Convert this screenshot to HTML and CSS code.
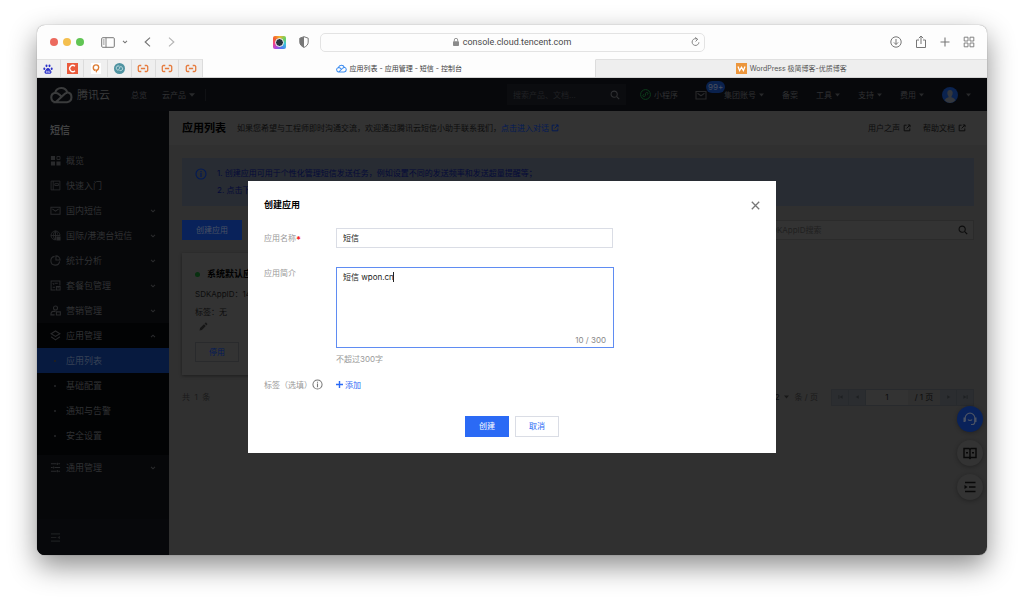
FILE: index.html
```html
<!DOCTYPE html>
<html lang="zh-CN">
<head>
<meta charset="utf-8">
<title>应用列表 - 应用管理 - 短信 - 控制台</title>
<link rel="stylesheet" href="styles.css">
</head>
<body>
<svg class="defs" aria-hidden="true">
  <symbol id="cloud" viewBox="0 0 24 18"><path d="M6 16.500a5 5 0 0 1-.6-9.900A6.600 6.600 0 0 1 18 6.200a5.200 5.200 0 0 1-.2 10.300H6l8.600-8A4.600 4.600 0 0 1 18 6.600M5.400 6.600c2.200 0 3.600 1.200 4.600 2.200l2 2" fill="none" stroke="currentColor" stroke-width="2.200"/></symbol>
  <symbol id="search" viewBox="0 0 12 12"><circle cx="5" cy="5" r="3.700" fill="none" stroke="currentColor" stroke-width="1.300"/><path d="M8 8l3 3" stroke="currentColor" stroke-width="1.500"/></symbol>
  <symbol id="down" viewBox="0 0 6 4"><path d="M0 .3h6L3 3.700z" fill="currentColor"/></symbol>
  <symbol id="chev" viewBox="0 0 6 4"><path d="M1 .8l2 2 2-2" fill="none" stroke="currentColor" stroke-width="1.100"/></symbol>
  <symbol id="ext" viewBox="0 0 10 10"><path d="M4.500 1.500h-3v7h7v-3M6 1.200h2.800V4M8.700 1.300L4.500 5.500" fill="none" stroke="currentColor" stroke-width="1.200"/></symbol>
  <symbol id="info" viewBox="0 0 12 12"><circle cx="6" cy="6" r="5" fill="none" stroke="currentColor" stroke-width="1.100"/><path d="M6 5v4M6 3v1.200" stroke="currentColor" stroke-width="1.200"/></symbol>
  <symbol id="mail" viewBox="0 0 12 12"><path d="M1 2.500h10v7.500H1zM2.500 4.300L6 6.800l3.500-2.500" fill="none" stroke="currentColor" stroke-width="1.100"/></symbol>
  <symbol id="link" viewBox="0 0 14 10"><path d="M5 1.500H3A1.500 1.500 0 0 0 1.500 3v4A1.500 1.500 0 0 0 3 8.500h2M9 1.500h2A1.500 1.500 0 0 1 12.500 3v4A1.500 1.500 0 0 1 11 8.500H9M4.500 5h5" fill="none" stroke="#e57a3c" stroke-width="1.500"/></symbol>
</svg>

<div class="window">
  <div class="toolbar">
    <div class="lights"><i class="red"></i><i class="yellow"></i><i class="green"></i></div>
    <button class="tool side" aria-label="边栏"><svg width="14" height="11" viewBox="0 0 14 11"><rect x=".7" y=".7" width="12.600" height="9.600" rx="1" fill="none" stroke="currentColor"/><path d="M5 .7v9.600M2 3h1.600M2 5h1.600M2 7h1.600" stroke="currentColor" stroke-width=".9"/></svg></button>
    <button class="tool drop" aria-label="标签组"><svg width="6" height="4"><use href="#chev"/></svg></button>
    <button class="tool back" aria-label="后退"><svg width="7" height="10" viewBox="0 0 7 10"><path d="M6 .6L1.200 5 6 9.400" fill="none" stroke="currentColor" stroke-width="1.200"/></svg></button>
    <button class="tool next" aria-label="前进"><svg width="7" height="10" viewBox="0 0 7 10"><path d="M1 .6L5.800 5 1 9.400" fill="none" stroke="currentColor" stroke-width="1.200"/></svg></button>
    <span class="camera"><i></i></span>
    <svg class="shield" width="10" height="12" viewBox="0 0 10 12"><path d="M5 .7l4.200 1.500v4C9.200 8.500 7.500 10.300 5 11.400 2.500 10.300.8 8.500.8 6.200v-4z" fill="none" stroke="#777"/><path d="M5 .7L.8 2.200v4C.8 8.500 2.500 10.300 5 11.400z" fill="#777"/></svg>
    <div class="address">
      <svg width="6" height="8" viewBox="0 0 6 8"><rect y="3.300" width="6" height="4.700" rx=".8" fill="#8b8b8b"/><path d="M1.300 3.500V2a1.700 1.700 0 0 1 3.400 0v1.500" fill="none" stroke="#8b8b8b" stroke-width=".9"/></svg>
      <span>console.cloud.tencent.com</span>
      <button class="tool reload" aria-label="刷新"><svg width="9" height="10" viewBox="0 0 9 10"><path d="M6.500 2.300A3.400 3.400 0 1 0 7.900 5.300M4.200.4l2.400 1.900-2 2.200" fill="none" stroke="currentColor" stroke-width=".9"/></svg></button>
    </div>
    <div class="actions">
      <button class="tool" aria-label="下载"><svg width="12" height="12" viewBox="0 0 12 12"><circle cx="6" cy="6" r="5.200" fill="none" stroke="currentColor"/><path d="M6 3v5.500M3.900 6.400L6 8.500l2.100-2.100" fill="none" stroke="currentColor"/></svg></button>
      <button class="tool" aria-label="共享"><svg width="12" height="14" viewBox="0 0 12 14"><path d="M4 5H1.500v7.500h9V5H8M6 9V1.200M3.800 3.200L6 1l2.200 2.200" fill="none" stroke="currentColor"/></svg></button>
      <button class="tool" aria-label="新标签页"><svg width="10" height="10" viewBox="0 0 10 10"><path d="M5 .5v9M.5 5h9" stroke="currentColor" stroke-width="1.100"/></svg></button>
      <button class="tool" aria-label="标签页概览"><svg width="12" height="12" viewBox="0 0 12 12"><path d="M1.200 1.200h3.800v3.800H1.200zM7 1.200h3.800v3.800H7zM1.200 7h3.800v3.800H1.200zM7 7h3.800v3.800H7z" fill="none" stroke="currentColor" stroke-width=".9"/></svg></button>
    </div>
  </div>

  <div class="tabs">
    <div class="pins">
      <a href="#" aria-label="百度"><svg width="10" height="10" viewBox="0 0 10 10" fill="#2a30c8"><ellipse cx="1.300" cy="4.700" rx="1" ry="1.300"/><ellipse cx="3.500" cy="1.800" rx="1" ry="1.400"/><ellipse cx="6.500" cy="1.800" rx="1" ry="1.400"/><ellipse cx="8.700" cy="4.700" rx="1" ry="1.300"/><path d="M5 4c1.500 0 1.800 1.500 2.800 2.400 1.300 1.300.7 3.300-1 3.300H3.200c-1.700 0-2.300-2-1-3.300C3.200 5.500 3.500 4 5 4z"/><path d="M3.300 7h1v1.500h-1zM5.500 6.700v1.800h1.300V6.700" fill="none" stroke="#fff" stroke-width=".5"/></svg></a>
      <a href="#" aria-label="C"><svg width="11" height="11" viewBox="0 0 11 11"><rect width="11" height="11" fill="#ea5a3c"/><path d="M8 3.300A3.100 3.100 0 1 0 8 7.700" fill="none" stroke="#fff" stroke-width="1.300"/></svg></a>
      <a href="#" aria-label="Q"><svg width="10" height="11" viewBox="0 0 10 11"><rect width="10" height="11" fill="#fff"/><path d="M4.500 7.500C3 7.200 2.300 6.200 2.300 4.800c0-1.700 1.200-2.900 2.700-2.900s2.700 1.200 2.700 2.700c0 1.300-.8 2.300-2 2.700" fill="none" stroke="#dc7b32" stroke-width="1.400"/><path d="M4.500 5.800l2 1.700L5 10z" fill="#dc7b32"/></svg></a>
      <a href="#" aria-label="S"><svg width="11" height="11" viewBox="0 0 11 11"><circle cx="5.500" cy="5.500" r="5.500" fill="#4f93a1"/><path d="M5.500 3.200c-2-.9-3.500.3-3.200 2.200s2 2.100 2.700 1 .2-2.800 1.700-2.700 2 1.200 1.900 2.300-1.600 1.900-3.100 1.500" fill="none" stroke="#d8ecef" stroke-width=".8"/></svg></a>
      <a href="#" aria-label="阿里云"><svg width="12" height="9"><use href="#link"/></svg></a>
      <a href="#" aria-label="阿里云"><svg width="12" height="9"><use href="#link"/></svg></a>
      <a href="#" aria-label="阿里云"><svg width="12" height="9"><use href="#link"/></svg></a>
    </div>
    <a href="#" class="tab current"><svg class="tabcloud" width="11" height="9"><use href="#cloud"/></svg>应用列表 - 应用管理 - 短信 - 控制台</a>
    <a href="#" class="tab"><svg width="11" height="11" viewBox="0 0 11 11"><rect width="11" height="11" fill="#ec963c"/><path d="M2 3.500L3.600 7.500 5.500 4.200 7.400 7.500 9 3.500" fill="none" stroke="#fff" stroke-width="1.300"/></svg>WordPress 极简博客-优质博客</a>
  </div>

  <div class="console">
    <header class="topnav">
      <a href="#" class="logo"><svg width="23" height="18"><use href="#cloud"/></svg>腾讯云</a>
      <a href="#" class="overview">总览</a>
      <a href="#" class="products">云产品<svg width="6" height="4"><use href="#down"/></svg></a>
      <label class="navsearch"><input type="text" aria-label="搜索" placeholder="搜索产品、文档..."><svg width="10" height="10"><use href="#search"/></svg></label>
      <a href="#" class="mini"><svg width="11" height="11" viewBox="0 0 11 11"><circle cx="5.500" cy="5.500" r="4.900" fill="none" stroke="currentColor"/><path d="M3.800 5.400c-1.200.3-1.400 2.100 0 2.100 1 0 1.600-.5 1.600-1.500V5c0-1 .7-1.500 1.600-1.500 1.400 0 1.300 1.800 0 2.100" fill="none" stroke="currentColor"/></svg><span>小程序</span></a>
      <a href="#" class="mailbox" aria-label="消息"><svg width="12" height="12"><use href="#mail"/></svg><b>99+</b></a>
      <nav class="menus">
        <a href="#">集团账号<svg width="5" height="4"><use href="#down"/></svg></a>
        <a href="#">备案</a>
        <a href="#">工具<svg width="5" height="4"><use href="#down"/></svg></a>
        <a href="#">支持<svg width="5" height="4"><use href="#down"/></svg></a>
        <a href="#">费用<svg width="5" height="4"><use href="#down"/></svg></a>
      </nav>
      <a href="#" class="avatar" aria-label="账号"><svg width="16" height="16" viewBox="0 0 16 16"><circle cx="8" cy="8" r="8" fill="#0b234f"/><path d="M8 3c1.900 0 2.900 1.300 2.700 3.200-.1 1.500-.6 2.300-1.200 3v1c2 .7 3.500 1.200 3.800 3.400A8 8 0 0 1 8 16a8 8 0 0 1-5.300-2.400c.3-2.200 1.800-2.700 3.800-3.400v-1c-.6-.7-1.100-1.500-1.200-3C5.100 4.300 6.100 3 8 3z" fill="#34373c"/></svg><svg width="5" height="4"><use href="#down"/></svg></a>
    </header>

    <div class="body">
      <aside class="sidebar">
        <h2>短信</h2>
        <nav>
          <a href="#"><svg viewBox="0 0 12 12"><path d="M1 1h4.500v4.500H1zM1 7h4.500v4.500H1zM7 7h4.500v4.500H7z" fill="currentColor"/><path d="M7.600 1.600h3.300v3.300H7.600z" fill="none" stroke="currentColor"/></svg>概览</a>
          <a href="#"><svg viewBox="0 0 12 12"><path d="M1.200 1.200h9.600v9.600H1.200zM3.500 1.200v9.600M5.200 4h4v2h-4z" fill="none" stroke="currentColor"/></svg>快速入门</a>
          <a href="#"><svg><use href="#mail"/></svg>国内短信<svg class="chev"><use href="#chev"/></svg></a>
          <a href="#"><svg viewBox="0 0 12 12"><path d="M6 10.800A4.900 4.900 0 1 1 10.900 6M6 1v10M1 6h10M6 1C3 3.500 3 8.500 6 11M6 1c1.500 1 2.300 2.500 2.400 4" fill="none" stroke="currentColor"/><path d="M7 7h4.500v4.500H7z" fill="currentColor"/></svg>国际/港澳台短信<svg class="chev"><use href="#chev"/></svg></a>
          <a href="#"><svg viewBox="0 0 12 12"><path d="M5 1.500A4.800 4.800 0 1 0 10.500 7M6.500 1v4.500H11A4.600 4.600 0 0 0 6.500 1z" fill="none" stroke="currentColor" stroke-width="1.200"/></svg>统计分析<svg class="chev"><use href="#chev"/></svg></a>
          <a href="#"><svg viewBox="0 0 12 12"><path d="M6 10.800H1.200V1.200h9.600V6M3 3.500l1.500 1.500M5 3.500h3.500M3 8h2.500M7 7h4v4H7zM8 8.500h2" fill="none" stroke="currentColor" stroke-width="1.100"/></svg>套餐包管理<svg class="chev"><use href="#chev"/></svg></a>
          <a href="#"><svg viewBox="0 0 12 12"><circle cx="6" cy="3.300" r="2.200" fill="none" stroke="currentColor" stroke-width="1.200"/><path d="M6 7H3.500C2 7 1 8 1 10.800h4M7 7.500h4.300v3.400H7z" fill="none" stroke="currentColor" stroke-width="1.200"/></svg>营销管理<svg class="chev"><use href="#chev"/></svg></a>
          <div class="group">
            <a href="#"><svg viewBox="0 0 12 12"><path d="M6 1l4.800 3L6 7 1.200 4zM1.200 7.300L6 10.800l4.800-3.500" fill="none" stroke="currentColor" stroke-width="1.200"/></svg>应用管理<svg class="chev up"><use href="#chev"/></svg></a>
            <a href="#" class="sub active"><i></i>应用列表</a>
            <a href="#" class="sub"><i></i>基础配置</a>
            <a href="#" class="sub"><i></i>通知与告警</a>
            <a href="#" class="sub"><i></i>安全设置</a>
          </div>
          <a href="#"><svg viewBox="0 0 12 12"><path d="M1 2h6M9 2h2M8 .8v2.400M1 6h2M5 6h6M4 4.800v2.400M1 10h6M9 10h2M8 8.800v2.400" fill="none" stroke="currentColor" stroke-width="1.100"/></svg>通用管理<svg class="chev"><use href="#chev"/></svg></a>
        </nav>
        <button class="collapse" aria-label="收起"><svg viewBox="0 0 12 12"><path d="M1 2h10M1 6h6M1 10h10" stroke="currentColor" stroke-width="1.200"/><path d="M11 4v4L8 6z" fill="currentColor"/></svg></button>
      </aside>

      <main class="content">
        <div class="pagehead">
          <h1>应用列表</h1>
          <p>如果您希望与工程师即时沟通交流，欢迎通过腾讯云短信小助手联系我们，<a href="#">点击进入对话 <svg width="8" height="8"><use href="#ext"/></svg></a></p>
          <div class="help"><a href="#">用户之声<svg width="8" height="8"><use href="#ext"/></svg></a><a href="#">帮助文档<svg width="8" height="8"><use href="#ext"/></svg></a></div>
        </div>
        <div class="page">
          <div class="notice"><svg width="12" height="12"><use href="#info"/></svg><div><p>1. 创建应用可用于个性化管理短信发送任务，例如设置不同的发送频率和发送超量提醒等；</p><p>2. 点击下</p></div></div>
          <div class="actionsrow">
            <button class="create">创建应用</button>
            <label class="appsearch"><input type="text" aria-label="搜索应用" placeholder="SDKAppID搜索"><svg width="10" height="10"><use href="#search"/></svg></label>
          </div>
          <section class="card">
            <h3><i></i>系统默认应用</h3>
            <p>SDKAppID：14</p>
            <p class="tagline">标签：无</p>
            <svg class="pencil" width="9" height="9" viewBox="0 0 9 9"><path d="M.5 8.500l.6-2.400L5 2.200 6.800 4 2.900 7.900zM5.600 1.600l.8-.8c.3-.3.6-.3.9 0l.9.9c.3.300.3.600 0 .9l-.8.800z" fill="currentColor"/></svg>
            <button>停用</button>
          </section>
          <div class="pager">
            <span class="muted">共&nbsp; 1&nbsp; 条</span>
            <span class="size">12 <svg width="5" height="4"><use href="#down"/></svg> <em>条 / 页</em></span>
            <div class="steps">
              <button aria-label="首页"><svg viewBox="0 0 6 6"><path d="M1 .8v4.400" stroke="currentColor"/><path d="M5.500.8v4.400L2 3z" fill="currentColor"/></svg></button>
              <button aria-label="上一页"><svg viewBox="0 0 6 6"><path d="M4.500.8v4.400L1 3z" fill="currentColor"/></svg></button>
              <input type="text" value="1" aria-label="页码"><span>/ 1 页</span>
              <button aria-label="下一页"><svg viewBox="0 0 6 6"><path d="M1.500.8v4.400L5 3z" fill="currentColor"/></svg></button>
              <button aria-label="末页"><svg viewBox="0 0 6 6"><path d="M5 .8v4.400" stroke="currentColor"/><path d="M.5.8v4.400L4 3z" fill="currentColor"/></svg></button>
            </div>
          </div>
        </div>
      </main>
    </div>

    <div class="floaters">
      <button class="service" aria-label="客服"><svg width="16" height="16" viewBox="0 0 16 16"><path d="M3.200 10V7a4.800 4.800 0 0 1 9.600 0v4c0 1.500-1 2.500-2.500 2.500H9M6 8.500c.8 1.200 3.200 1.200 4 0" fill="none" stroke="currentColor" stroke-width="1.200"/><path d="M1.500 6.500h2V11h-2zM12.500 6.500h2V11h-2z" fill="currentColor"/></svg></button>
      <button aria-label="文档"><svg width="14" height="13" viewBox="0 0 14 13"><path d="M7 2.500L6 1.500H1v9h5l1 1 1-1h5v-9H8zM7 2.500v9M3 5.800h2M9 5.800h2" fill="none" stroke="currentColor" stroke-width="1.400"/></svg></button>
      <button aria-label="目录"><svg width="12" height="12" viewBox="0 0 12 12"><path d="M1 1.500h10.500M5 6h6.500M1 10.500h10.500" stroke="currentColor" stroke-width="1.400"/><path d="M.5 4l3 2-3 2z" fill="currentColor"/></svg></button>
    </div>

    <div class="overlay">
      <form class="dialog" role="dialog" aria-labelledby="dlg">
        <div class="dialoghead"><h2 id="dlg">创建应用</h2><button type="button" aria-label="关闭"><svg width="9" height="9" viewBox="0 0 9 9"><path d="M.8.8l7.400 7.400M8.200.8L.8 8.200" stroke="currentColor" stroke-width="1.300"/></svg></button></div>
        <div class="row">
          <label for="name">应用名称<sup>*</sup></label>
          <input id="name" type="text" value="短信">
        </div>
        <div class="row intro">
          <label for="intro">应用简介</label>
          <div class="field"><div class="area"><textarea id="intro">短信 wpon.cn</textarea><i class="caret"></i><span class="count">10 / 300</span></div><p class="hint">不超过300字</p></div>
        </div>
        <div class="row tags">
          <span class="name">标签（选填）<svg width="11" height="11"><use href="#info"/></svg></span>
          <button type="button"><svg width="7" height="7" viewBox="0 0 7 7"><path d="M3.500 0v7M0 3.500h7" stroke="currentColor" stroke-width="1.400"/></svg>添加</button>
        </div>
        <div class="buttons"><button type="button" class="primary">创建</button><button type="button">取消</button></div>
      </form>
    </div>
  </div>
</div>
</body>
</html>
```
FILE: styles.css
```css
* { box-sizing: border-box; }
body {
  margin: 0;
  min-height: 100vh;
  padding: 25px 37px 49px;
  display: flex;
  background: #fff;
  font: 8px/12px Inter, "Noto Sans CJK SC", sans-serif;
}
h1, h2, h3, p { margin: 0; }
a { color: inherit; text-decoration: none; }
i, em { font-style: normal; }
svg { flex: none; display: block; }
button, input, textarea { font: inherit; color: inherit; margin: 0; padding: 0; border: 0; background: none; outline: 0; }
.defs { position: absolute; width: 0; height: 0; }

.window {
  flex: 1;
  display: flex;
  flex-direction: column;
  border-radius: 8px;
  overflow: hidden;
  background: #fdfdfd;
  box-shadow: 0 0 1px rgba(0, 0, 0, .5), 0 11px 28px rgba(0, 0, 0, .45);
}

/* Browser chrome */
.toolbar { display: flex; align-items: center; height: 34px; padding: 0 12px 0 13px; color: #777; }
.lights { display: flex; gap: 5px; }
.lights i { width: 8px; height: 8px; border-radius: 50%; }
.red { background: #ec6a5e; }
.yellow { background: #f4bf4f; }
.green { background: #61c554; }
.tool { display: flex; align-items: center; }
.side { margin-left: 17px; }
.drop { margin-left: 7px; }
.back { margin-left: 16px; }
.next { margin-left: 17px; color: #b5b5b5; }
.camera {
  display: grid;
  place-items: center;
  width: 13px;
  height: 13px;
  margin-left: 98px;
  border-radius: 2px;
  background: conic-gradient(#f5b52f, #6fcf5c, #3bc7d9, #4a7df0, #a24be6, #f0418f, #f4612f, #f5b52f);
}
.camera i { width: 9px; height: 9px; border-radius: 50%; background: #27343f; border: 1px solid #fff; }
.shield { margin-left: 13px; }
.address {
  flex: 0 1 385px;
  display: flex;
  align-items: center;
  justify-content: center;
  gap: 4px;
  height: 19px;
  margin-left: 11px;
  padding: 0 4px 0 16px;
  border: 1px solid #e3e3e3;
  border-radius: 5px;
  color: #4a4a4a;
  font-family: Roboto, sans-serif;
  font-size: 9px;
}
.address > svg { margin-left: auto; }
.reload { margin-left: auto; color: #777; }
.actions { display: flex; align-items: center; gap: 13px; margin-left: auto; }

.tabs { display: flex; height: 19px; border-bottom: 1px solid #d4d4d4; }
.pins { flex: 0 0 166px; display: flex; }
.pins a { flex: 1; display: grid; place-items: center; background: #efefef; border-right: 1px solid #dcdcdc; border-top: 1px solid #e2e2e2; }
.tab { flex: 1; display: flex; align-items: center; justify-content: center; gap: 3px; background: #eee; border-top: 1px solid #e0e0e0; color: #555; font-size: 7px; }
.tab.current { background: #fdfdfd; border-top-color: #fdfdfd; border-right: 1px solid #dcdcdc; color: #3c3c3c; }
.tabcloud { color: #3a8bf0; }

/* Console */
.console { position: relative; flex: 1; display: flex; flex-direction: column; background: #303030; }
.topnav { display: flex; align-items: center; height: 33px; padding: 0 16px 0 13px; background: #07080b; color: #303133; }
.topnav a { display: flex; align-items: center; gap: 3px; }
.topnav a svg { color: #28292b; }
.topnav .logo { gap: 4px; font-size: 11px; color: #3a3b3c; }
.topnav .logo svg { color: #3a3b3c; }
.overview { margin-left: 21px; }
.products { margin-left: 15px; padding-right: 10px; border-right: 1px solid #101114; }
.navsearch { display: flex; align-items: center; flex: 0 1 119px; min-width: 0; height: 21px; margin-left: auto; padding: 0 6px; background: #0b0c0f; }
.navsearch input { flex: 1; width: 0; min-width: 0; }
.navsearch input::placeholder { color: #202124; opacity: 1; }
.mini { margin-left: 14px; }
.topnav .mini svg { color: #0d3d1b; }
.mailbox { position: relative; margin-left: 17px; }
.mailbox b {
  position: absolute;
  left: 11px;
  top: -8px;
  padding: 0 2px;
  border-radius: 6px;
  background: #0a214d;
  color: #4a5160;
  font-weight: 400;
}
.menus { display: flex; gap: 18px; margin-left: 17px; }
.avatar { margin-left: 18px; }
.topnav .avatar { gap: 8px; }

.body { flex: 1; display: flex; }
.sidebar { flex: 0 0 132px; display: flex; flex-direction: column; background: #060709; color: #303133; font-size: 9px; }
.sidebar h2 { margin: 12px 13px 11px; font-size: 10px; line-height: 14px; color: #404142; }
.sidebar nav a { display: flex; align-items: center; gap: 5px; height: 25px; padding: 0 13px; }
.sidebar svg { width: 11px; height: 11px; color: #292a2c; }
.sidebar .chev { width: 6px; height: 4px; margin-left: auto; }
.sidebar .up { transform: rotate(180deg); }
.group { padding-bottom: 7px; background: #020304; }
.sidebar .sub { gap: 10px; padding-left: 17px; }
.sub i { width: 2px; height: 2px; background: #1d1e20; }
.sidebar .active { background: #071a3f; color: #374256; }
.collapse { margin-top: auto; height: 36px; padding: 0 13px; background: #07080b; }
.collapse svg { color: #1d1e20; }

.content { flex: 1; min-width: 0; color: #0c0c0c; }
.pagehead { display: flex; align-items: center; gap: 11px; height: 34px; padding: 0 21px 0 13px; background: #333; }
h1 { font-size: 11px; color: #000; }
.pagehead p a { color: #031a55; }
.pagehead p svg { display: inline; vertical-align: -1px; }
.help { display: flex; gap: 12px; margin-left: auto; }
.help a { display: flex; align-items: center; gap: 3px; }
.page { padding: 13px 13px 0; }
.notice { display: flex; gap: 10px; height: 48px; padding: 7px 13px; background: #282c33; color: #040a38; line-height: 17px; }
.notice svg { margin-top: 3px; color: #031a55; }
.actionsrow { display: flex; justify-content: space-between; height: 20px; margin-top: 14px; }
.create { width: 60px; background: #09225a; color: #4a5264; }
.appsearch { display: flex; align-items: center; width: 260px; padding: 0 5px; background: #333; border: 1px solid #2b2b2b; }
.appsearch input { flex: 1; min-width: 0; padding-left: 46px; }
.appsearch input::placeholder { color: #202020; opacity: 1; }
.card { width: 258px; height: 122px; margin-top: 13px; padding: 13px; background: #333; box-shadow: 0 1px 3px rgba(0, 0, 0, .4); }
.card h3 { display: flex; align-items: center; gap: 7px; font-size: 9px; line-height: 16px; color: #000; }
.card h3 i { width: 5px; height: 5px; border-radius: 50%; background: #083010; }
.card p { margin-top: 6px; }
.pencil { margin: 4px 0 0 4px; color: #171717; }
.card button { width: 44px; height: 20px; margin-top: 11px; border: 1px solid #292a2c; color: #031a55; }
.pager { display: flex; align-items: center; height: 16px; margin-top: 14px; }
.muted, .pager em { color: #1a1a1a; }
.size { display: flex; align-items: center; gap: 4px; margin-left: auto; }
.size svg { color: #181818; }
.size em { margin-left: 2px; }
.steps { display: flex; height: 17px; margin-left: 13px; border: 1px solid #282a2d; line-height: 15px; }
.steps button { display: grid; place-items: center; width: 17px; background: #2b2d30; border-right: 1px solid #272a2d; color: #1e2022; }
.steps button:last-child { border-right: 0; width: 16px; }
.steps button svg { width: 5px; height: 6px; }
.steps input { width: 42px; background: #333; text-align: center; }
.steps span { width: 32px; text-align: center; }

.floaters { position: absolute; right: 4px; bottom: 55px; display: flex; flex-direction: column; gap: 8px; }
.floaters button { display: grid; place-items: center; width: 26px; height: 26px; border-radius: 50%; background: #333; color: #080808; box-shadow: 0 1px 4px rgba(0, 0, 0, .3); }
.floaters .service { background: #09225a; color: #4a5264; }

/* Dialog */
.overlay { position: absolute; inset: 0; display: grid; place-items: center; }
.dialog { width: 528px; padding: 16px; background: #fff; color: #222; }
.dialoghead { display: flex; justify-content: space-between; height: 16px; margin-bottom: 15px; }
.dialog h2 { font-size: 9px; line-height: 16px; color: #000; }
.dialoghead button { display: flex; align-items: center; padding-top: 2px; color: #777; }
.row { display: flex; align-items: center; }
.row label, .row .name { flex: 0 0 72px; color: #999; }
.row sup { color: #f02020; font-size: 9px; font-weight: 700; line-height: 0; vertical-align: -2px; }
.row input { width: 277px; height: 20px; padding: 0 6px; border: 1px solid #dadde5; }
.intro { align-items: flex-start; margin-top: 19px; }
.area { position: relative; width: 278px; }
textarea { display: block; width: 100%; height: 81px; padding: 3px 6px; border: 1px solid #5f8cf2; resize: none; }
.caret { position: absolute; left: 57px; top: 5px; width: 1px; height: 10px; background: #222; }
.count { position: absolute; right: 8px; bottom: 2px; color: #888; }
.hint { margin-top: 4px; line-height: 14px; color: #999; }
.tags { height: 16px; margin-top: 11px; }
.tags .name { display: flex; align-items: center; white-space: nowrap; }
.tags .name svg { color: #777; }
.tags button { display: flex; align-items: center; gap: 2px; color: #2b6af5; }
.buttons { display: flex; justify-content: center; gap: 6px; margin-top: 23px; }
.buttons button { width: 44px; height: 21px; border: 1px solid #dadde5; color: #2b6af5; }
.buttons .primary { background: #2b6af5; border-color: #2b6af5; color: #fff; }
```
